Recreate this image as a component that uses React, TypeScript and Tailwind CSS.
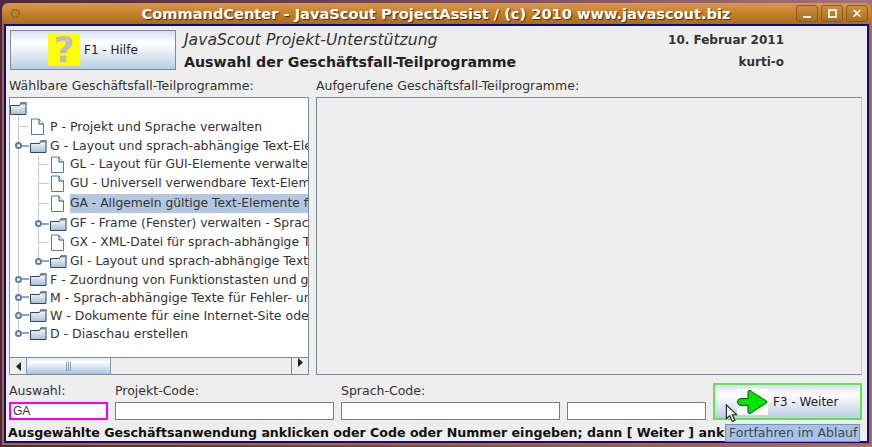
import type { ReactNode } from "react";

type Row = { label: string; level: 0 | 1 | 2; kind: "folder" | "doc"; handle?: boolean; h: string; selected?: boolean };

const ROWS: Row[] = [
  { label: "", level: 0, kind: "folder", h: "h-[19px]" },
  { label: "P - Projekt und Sprache verwalten", level: 1, kind: "doc", h: "h-[19px]" },
  { label: "G - Layout und sprach-abhängige Text-Elemente verwalten", level: 1, kind: "folder", handle: true, h: "h-[19px]" },
  { label: "GL - Layout für GUI-Elemente verwalten", level: 2, kind: "doc", h: "h-[19px]" },
  { label: "GU - Universell verwendbare Text-Elemente verwalten", level: 2, kind: "doc", h: "h-[19px]" },
  { label: "GA - Allgemein gültige Text-Elemente für alle Sprachen", level: 2, kind: "doc", h: "h-[21px]", selected: true },
  { label: "GF - Frame (Fenster) verwalten - Sprach-abhängig", level: 2, kind: "folder", handle: true, h: "h-[19px]" },
  { label: "GX - XML-Datei für sprach-abhängige Texte erstellen", level: 2, kind: "doc", h: "h-[19px]" },
  { label: "GI - Layout und sprach-abhängige Texte importieren", level: 2, kind: "folder", handle: true, h: "h-[18px]" },
  { label: "F - Zuordnung von Funktionstasten und grafischen Symbolen", level: 1, kind: "folder", handle: true, h: "h-[18px]" },
  { label: "M - Sprach-abhängige Texte für Fehler- und Warnmeldungen", level: 1, kind: "folder", handle: true, h: "h-[18px]" },
  { label: "W - Dokumente für eine Internet-Site oder Web-Anwendung", level: 1, kind: "folder", handle: true, h: "h-[18px]" },
  { label: "D - Diaschau erstellen", level: 1, kind: "folder", handle: true, h: "h-[18px]" },
];

function FolderIcon() {
  return (
    <svg width="17" height="14" viewBox="0 0 17 14" className="shrink-0">
      <defs>
        <linearGradient id="fold" x1="0" y1="0" x2="0" y2="1">
          <stop offset="0" stopColor="#ffffff" />
          <stop offset="1" stopColor="#a9bfd6" />
        </linearGradient>
      </defs>
      <path d="M0.5 4.5 H9.5 L11 1.5 H16 V13.5 H0.5 Z" fill="url(#fold)" stroke="#33475c" />
      <path d="M10 3.5 L11.5 1 H16.5 V3.5 Z" fill="#6d87a3" />
    </svg>
  );
}

function DocIcon() {
  return (
    <svg width="15" height="18" viewBox="0 0 15 18" className="shrink-0">
      <path d="M1.5 1 H9 L13.5 6 V16.5 H1.5 Z" fill="#ffffff" stroke="#4a7fb5" />
      <path d="M9 1 V6 H13.5" fill="#e6eef6" stroke="#33506e" />
    </svg>
  );
}

function TreeRow({ row }: { row: Row }) {
  return (
    <div className={`flex items-center ${row.h} ${row.level === 2 ? "text-[12.3px]" : ""}`}>
      {row.level === 2 && <div className="w-[20px] shrink-0" />}
      {row.level > 0 && (
        <div className="flex w-[20px] shrink-0 items-center">
          {row.handle ? (
            <>
              <div className="ml-[5px] h-[7px] w-[7px] shrink-0 rounded-full border-2 border-[#5d7da3] bg-white" />
              <div className="h-[2px] w-[7px] bg-[#8fa6bf]" />
            </>
          ) : (
            <div className="ml-[8px] h-px w-[11px] bg-[#c4cdd6]" />
          )}
        </div>
      )}
      <div className="flex w-[20px] shrink-0 items-center">{row.kind === "folder" ? <FolderIcon /> : <DocIcon />}</div>
      {row.label && (
        <span className={`whitespace-nowrap pr-[3px] leading-[19px] ${row.selected ? "grow bg-[#b3c7e0]" : ""}`}>
          {row.label}
        </span>
      )}
    </div>
  );
}

function ScrollArrow({ dir }: { dir: "left" | "right" }) {
  return (
    <div className="flex w-[16px] shrink-0 items-center justify-center bg-[#eeeeee]">
      <svg width="5" height="9" viewBox="0 0 5 9">
        <path d={dir === "left" ? "M5 0 L0 4.5 L5 9 Z" : "M0 0 L5 4.5 L0 9 Z"} fill="#222222" />
      </svg>
    </div>
  );
}

function Field({ label, width, value, pink }: { label: string; width: string; value?: string; pink?: boolean }) {
  return (
    <div className={`flex shrink-0 flex-col ${width}`}>
      <div className="h-[20px] pt-px leading-[16px]">{label}</div>
      <div
        className={`h-[18px] bg-white pl-[2px] text-[12px] leading-[14px] ${
          pink ? "border-2 border-[#f000f0] font-['Liberation_Sans',sans-serif]" : "border border-[#7d7d7d]"
        }`}
      >
        {value}
      </div>
    </div>
  );
}

function WinBtn({ children }: { children: ReactNode }) {
  return (
    <div className="flex h-[17px] w-[22px] items-center justify-center rounded-[3px] border border-[#8a5a1c] bg-gradient-to-b from-[#c98f48] to-[#a8701f]">
      {children}
    </div>
  );
}

const BUTTON_BG = "bg-gradient-to-b from-[#d6e0ec] via-[#ffffff] via-[30%] to-[#b9cee3]";

export default function App() {
  return (
    <div className="flex h-[447px] w-[872px] flex-col overflow-hidden bg-gradient-to-r from-[#4a2748] to-[#a56f88] pb-[2px] pl-[2px] pr-px pt-[3px] font-['DejaVu_Sans',sans-serif] text-[12.5px] text-[#333333]">
      <div className="flex h-[21px] shrink-0 items-center rounded-t-[6px] bg-gradient-to-b from-[#d8984c] via-[#c58128] to-[#a96c1f] pl-[9px] pr-[3px]">
        <div className="h-[9px] w-[9px] shrink-0 rounded-full border border-[#8a5a1c] bg-[#b98238]" />
        <div className="grow pl-[56px] text-center text-[14.6px] font-bold text-white [text-shadow:1px_1px_1px_#4a2c08]">
          CommandCenter - JavaScout ProjectAssist / (c) 2010 www.javascout.biz
        </div>
        <div className="flex shrink-0 gap-[3px]">
          <WinBtn>
            <div className="mt-[7px] h-[2px] w-[8px] bg-[#f3ead8]" />
          </WinBtn>
          <WinBtn>
            <div className="h-[9px] w-[9px] border-2 border-[#f3ead8]" />
          </WinBtn>
          <WinBtn>
            <span className="text-[13px] font-bold leading-none text-white">✕</span>
          </WinBtn>
        </div>
      </div>

      <div className="relative flex min-h-0 grow flex-col bg-[#a96c1f] px-[2px] pb-[2px]">
        <div className="flex min-h-0 grow flex-col border-2 border-[#0a0a9a] bg-[#eeeeee]">
          {/* head */}
          <div className="flex h-[48px] shrink-0 pl-[4px] pt-[4px]">
            <button
              type="button"
              className={`flex h-[40px] w-[166px] shrink-0 items-center border border-[#7d8a96] pl-[37px] text-[12px] ${BUTTON_BG}`}
            >
              <span className="flex h-[32px] w-[32px] items-center justify-center bg-[#ffff00] text-[36px] font-bold leading-none text-[#bdbdbd]">
                ?
              </span>
              <span className="ml-[4px] text-[#222222]">F1 - Hilfe</span>
            </button>
            <div className="ml-[8px] flex w-[600px] flex-col text-[12px]">
              <div className="flex h-[21px] items-center justify-between">
                <span className="text-[15.6px] font-extralight italic leading-[18px]">JavaScout Projekt-Unterstützung</span>
                <span className="font-bold">10. Februar 2011</span>
              </div>
              <div className="flex h-[24px] items-center justify-between">
                <span className="text-[14.2px] font-bold leading-[18px] text-[#222222]">Auswahl der Geschäftsfall-Teilprogramme</span>
                <span className="font-bold">kurti-o</span>
              </div>
            </div>
          </div>

          {/* middle */}
          <div className="flex h-[301px] shrink-0 gap-[7px] pl-[3px] pr-[5px]">
            <div className="flex w-[300px] shrink-0 flex-col">
              <div className="h-[23px] pt-[4px] leading-[16px]">Wählbare Geschäftsfall-Teilprogramme:</div>
              <div className="flex min-h-0 grow flex-col border border-[#7d8a96] bg-white">
                <div className="relative min-h-0 grow overflow-hidden text-[#333333]">
                  <div className="absolute left-[8px] top-[16px] h-[220px] w-px bg-[#c4cdd6]" />
                  <div className="absolute left-[28px] top-[57px] h-[106px] w-px bg-[#c4cdd6]" />
                  <div className="relative">
                    {ROWS.map((r) => (
                      <TreeRow key={r.label} row={r} />
                    ))}
                  </div>
                </div>
                <div className="flex h-[17px] shrink-0 border-t border-[#7d8a96] bg-[#eeeeee]">
                  <ScrollArrow dir="left" />
                  <div className="flex w-[85px] shrink-0 items-center justify-center gap-px border-x border-[#7d99b8] bg-gradient-to-b from-[#e3ebf4] via-[#ffffff] via-[25%] to-[#a9c3de]">
                    <div className="h-[9px] w-px bg-[#8a9cb0]" />
                    <div className="h-[9px] w-px bg-[#8a9cb0]" />
                    <div className="h-[9px] w-px bg-[#8a9cb0]" />
                  </div>
                  <div className="grow" />
                  <div className="border-l border-[#7d8a96]">
                    <ScrollArrow dir="right" />
                  </div>
                </div>
              </div>
            </div>
            <div className="flex min-w-0 grow flex-col">
              <div className="h-[23px] pt-[4px] leading-[16px]">Aufgerufene Geschäftsfall-Teilprogramme:</div>
              <div className="grow border border-[#7d8a96] border-r-[#c9c9c9] bg-[#eeeeee]" />
            </div>
          </div>

          {/* entry row */}
          <div className="mt-[9px] flex h-[36px] shrink-0 items-end pl-[3px]">
            <div className="flex gap-[7px]">
              <Field label="Auswahl:" width="w-[99px]" value="GA" pink />
              <Field label="Projekt-Code:" width="w-[219px]" />
              <Field label="Sprach-Code:" width="w-[219px]" />
              <Field label="" width="w-[139px]" />
            </div>
            <button
              type="button"
              className={`ml-[7px] flex h-[37px] w-[149px] shrink-0 items-center border-2 border-[#62e05a] pl-[22px] text-[12px] ${BUTTON_BG}`}
            >
              <span className="flex h-[26px] w-[31px] shrink-0 items-center justify-center bg-white">
                <svg width="31" height="26" viewBox="0 0 31 26">
                  <path
                    d="M4 9.5 H11 V3 Q11 1 13 1.5 Q14.5 2 16 3.5 L29.5 12 Q30.5 13 29.5 14 L16 22.5 Q14.5 24 13 24.5 Q11 25 11 23 V16.5 H4 Q0.5 16.5 0.5 13 Q0.5 9.5 4 9.5 Z"
                    fill="#00e400"
                    stroke="#0b4a0b"
                    strokeWidth="1"
                  />
                </svg>
              </span>
              <span className="ml-[5px] text-[#222222]">F3 - Weiter</span>
            </button>
          </div>

          {/* status line */}
          <div className="mt-[4px] min-h-0 grow overflow-hidden whitespace-nowrap pl-[2px] text-[12.6px] font-bold leading-[18px] text-[#111111]">
            Ausgewählte Geschäftsanwendung anklicken oder Code oder Nummer eingeben; dann [ Weiter ] anklicken
          </div>
        </div>

        {/* tooltip and pointer */}
        <div className="absolute bottom-[3px] left-[723px] h-[18px] w-[135px] border border-[#7a92b4] bg-[#a9c2e4] pl-[3px] leading-[16px] text-[#3a4656]">
          Fortfahren im Ablauf
        </div>
        <svg width="13" height="18" viewBox="0 0 14 21" className="absolute left-[723px] top-[380px]">
          <path d="M1 1 V17 L5 13.5 L8 20.5 L11 19 L8 12.5 H13 Z" fill="#f4f4f4" stroke="#1c1c1c" strokeWidth="1.3" />
        </svg>
      </div>
    </div>
  );
}
